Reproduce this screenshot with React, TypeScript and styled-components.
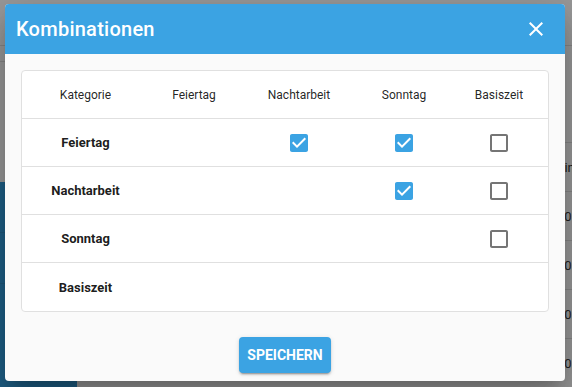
import React from "react";
import styled, { createGlobalStyle } from "styled-components";

const GlobalStyle = createGlobalStyle`
  html, body {
    margin: 0;
    padding: 0;
    font-family: Roboto, "Noto Sans", Arial, sans-serif;
  }
`;

const Page = styled.div`
  position: relative;
  width: 572px;
  height: 387px;
  overflow: hidden;
  background: #fff;
  display: flex;
  flex-direction: column;
`;

const TopBar = styled.div`
  height: 45px;
  flex-shrink: 0;
  border-bottom: 1px solid #ddd;
`;

const Main = styled.div`
  flex: 1;
  display: flex;
`;

const SideColumn = styled.div`
  width: 77px;
  flex-shrink: 0;
  display: flex;
  flex-direction: column;
`;

const SideTop = styled.div`
  height: 120px;
  border-top: 1px solid #ddd;
  margin-top: 15px;
`;

const SideNav = styled.div`
  flex: 1;
  background: #1d94dc;
`;

const SideNavItem = styled.div`
  height: 50px;
  border-bottom: 1px solid #1a86c8;
`;

const BgTable = styled.div`
  flex: 1;
  padding-top: 96px;
`;

const BgRow = styled.div`
  height: 48px;
  border-top: 1px solid #ddd;
  display: flex;
  align-items: center;
  padding-left: 480px;
  font-size: 13px;
  color: #222;
  white-space: nowrap;
`;

const Overlay = styled.div`
  position: absolute;
  inset: 0;
  background: rgba(33, 33, 33, 0.46);
  display: flex;
  align-items: flex-start;
  justify-content: flex-start;
  padding: 4px 0 0 5px;
`;

const Dialog = styled.div`
  width: 560px;
  background: #fafafa;
  border-radius: 4px;
  overflow: hidden;
  box-shadow: 0 11px 15px -7px rgba(0, 0, 0, 0.2), 0 24px 38px 3px rgba(0, 0, 0, 0.14),
    0 9px 46px 8px rgba(0, 0, 0, 0.12);
`;

const Header = styled.div`
  height: 50px;
  background: #3ba3e3;
  display: flex;
  align-items: center;
  justify-content: space-between;
  padding: 0 17px 0 11px;
`;

const Title = styled.h2`
  margin: 0;
  color: #fff;
  font-size: 20px;
  font-weight: 500;
  letter-spacing: 0.25px;
`;

const CloseButton = styled.button`
  width: 24px;
  height: 24px;
  padding: 0;
  border: 0;
  background: none;
  color: #fff;
  display: flex;
  cursor: pointer;
`;

const Body = styled.div`
  padding: 16px 16px 0;
`;

const Card = styled.div`
  background: #fff;
  border: 1px solid #e0e0e0;
  border-radius: 4px;
`;

const Table = styled.table`
  width: 100%;
  border-collapse: collapse;
  table-layout: fixed;
`;

const Th = styled.th`
  height: 47px;
  padding: 0;
  font-size: 12px;
  font-weight: 400;
  color: rgba(0, 0, 0, 0.87);
  text-align: center;
  border-bottom: 1px solid #e0e0e0;
`;

const Td = styled.td<{ $last?: boolean }>`
  height: ${(p) => (p.$last ? 48 : 47)}px;
  padding: 0;
  text-align: center;
  vertical-align: middle;
  border-bottom: ${(p) => (p.$last ? "none" : "1px solid #e0e0e0")};
`;

const RowLabel = styled(Td)`
  font-size: 13px;
  font-weight: 700;
  color: rgba(0, 0, 0, 0.9);
`;

const CheckWrap = styled.span`
  display: inline-flex;
  vertical-align: middle;
`;

const Actions = styled.div`
  display: flex;
  justify-content: center;
  padding: 25px 0 8px;
`;

const SaveButton = styled.button`
  height: 36px;
  min-width: 91px;
  padding: 0 8px;
  border: 0;
  border-radius: 4px;
  background: #3ba3e3;
  color: #fff;
  font-family: Roboto, Arial, sans-serif;
  font-size: 14px;
  font-weight: 700;
  text-transform: uppercase;
  box-shadow: 0 3px 1px -2px rgba(0, 0, 0, 0.2), 0 2px 2px 0 rgba(0, 0, 0, 0.14),
    0 1px 5px 0 rgba(0, 0, 0, 0.12);
  cursor: pointer;
`;

const Checkbox: React.FC<{ checked: boolean }> = ({ checked }) => (
  <CheckWrap>
    {checked ? (
      <svg width="24" height="24" viewBox="0 0 24 24">
        <path
          fill="#3ba3e3"
          d="M19 3H5c-1.11 0-2 .9-2 2v14c0 1.1.89 2 2 2h14c1.11 0 2-.9 2-2V5c0-1.1-.89-2-2-2zm-9 14l-5-5 1.41-1.41L10 14.17l7.59-7.59L19 8l-9 9z"
        />
      </svg>
    ) : (
      <svg width="24" height="24" viewBox="0 0 24 24">
        <path
          fill="#757575"
          d="M19 5v14H5V5h14m0-2H5c-1.1 0-2 .9-2 2v14c0 1.1.9 2 2 2h14c1.1 0 2-.9 2-2V5c0-1.1-.9-2-2-2z"
        />
      </svg>
    )}
  </CheckWrap>
);

const categories = ["Feiertag", "Nachtarbeit", "Sonntag", "Basiszeit"];
const colWidths = [127, 90, 120, 90, 100];

// combinations above the diagonal, true = checked
const checkedMap: Record<string, boolean> = {
  "Feiertag-Nachtarbeit": true,
  "Feiertag-Sonntag": true,
  "Feiertag-Basiszeit": false,
  "Nachtarbeit-Sonntag": true,
  "Nachtarbeit-Basiszeit": false,
  "Sonntag-Basiszeit": false,
};

const bgRows = ["Ein", "00", "20", "00", "00"];

export default function App() {
  return (
    <>
      <GlobalStyle />
      <Page>
        <TopBar />
        <Main>
          <SideColumn>
            <SideTop />
            <SideNav>
              <SideNavItem />
              <SideNavItem />
            </SideNav>
          </SideColumn>
          <BgTable>
            {bgRows.map((t, i) => (
              <BgRow key={i}>{t}</BgRow>
            ))}
          </BgTable>
        </Main>
        <Overlay>
          <Dialog>
            <Header>
              <Title>Kombinationen</Title>
              <CloseButton aria-label="Schließen">
                <svg width="24" height="24" viewBox="0 0 24 24">
                  <path
                    fill="currentColor"
                    d="M19 6.41L17.59 5 12 10.59 6.41 5 5 6.41 10.59 12 5 17.59 6.41 19 12 13.41 17.59 19 19 17.59 13.41 12z"
                  />
                </svg>
              </CloseButton>
            </Header>
            <Body>
              <Card>
                <Table>
                  <colgroup>
                    {colWidths.map((w, i) => (
                      <col key={i} style={{ width: w }} />
                    ))}
                  </colgroup>
                  <thead>
                    <tr>
                      <Th>Kategorie</Th>
                      {categories.map((c) => (
                        <Th key={c}>{c}</Th>
                      ))}
                    </tr>
                  </thead>
                  <tbody>
                    {categories.map((row, ri) => {
                      const last = ri === categories.length - 1;
                      return (
                        <tr key={row}>
                          <RowLabel $last={last}>{row}</RowLabel>
                          {categories.map((col, ci) => {
                            const key = `${row}-${col}`;
                            return (
                              <Td key={col} $last={last}>
                                {ci > ri && key in checkedMap ? (
                                  <Checkbox checked={checkedMap[key]} />
                                ) : null}
                              </Td>
                            );
                          })}
                        </tr>
                      );
                    })}
                  </tbody>
                </Table>
              </Card>
            </Body>
            <Actions>
              <SaveButton>Speichern</SaveButton>
            </Actions>
          </Dialog>
        </Overlay>
      </Page>
    </>
  );
}
